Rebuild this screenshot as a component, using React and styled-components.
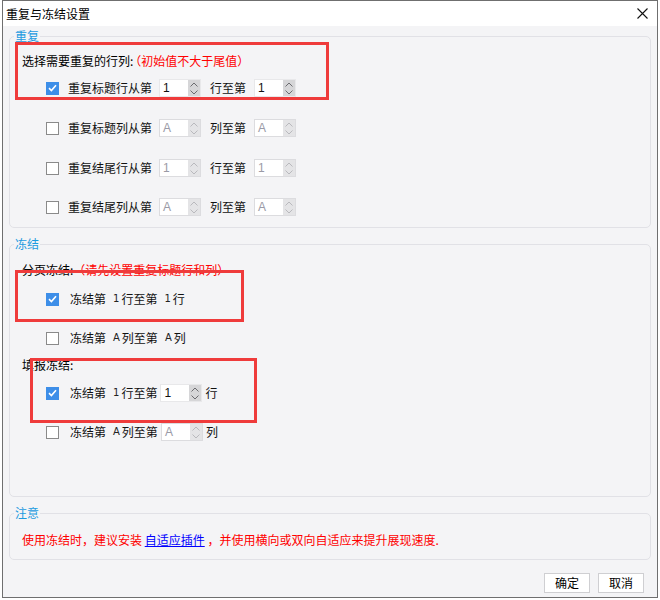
import React from "react";
import styled, { createGlobalStyle } from "styled-components";

const Global = createGlobalStyle`
  html, body { margin: 0; padding: 0; background: #ffffff; }
  body { font-family: "Noto Sans CJK SC", "Noto Sans", sans-serif; font-size: 12px; color: #000; }
  * { box-sizing: border-box; }
`;

const Dialog = styled.div`
  position: relative;
  width: 656px;
  height: 598px;
  margin-left: 2px;
  border: 1px solid #6f6f6f;
  background: #f4f4f6;
  display: flex;
  flex-direction: column;
`;

const TitleBar = styled.div`
  height: 25px;
  flex: none;
  background: #ffffff;
  display: flex;
  align-items: center;
  justify-content: space-between;
  padding: 0 9px 0 3px;
`;

const Title = styled.span`
  font-size: 12px;
  line-height: 14px;
  color: #000;
`;

const Body = styled.div`
  display: flex;
  flex-direction: column;
  padding: 0 6px;
`;

const Group = styled.fieldset`
  margin: ${(p) => p.$mt}px 0 0;
  padding: 0;
  border: 1px solid #e1e1e6;
  border-radius: 5px;
  min-width: 0;
`;

const Legend = styled.legend`
  margin-left: 4px;
  padding: 0 1px;
  font-size: 12px;
  line-height: 14px;
  color: #1c9be0;
`;

const Content = styled.div`
  display: flex;
  flex-direction: column;
  padding: ${(p) => p.$pt}px 12px ${(p) => p.$pb}px 12px;
`;

const Line = styled.div`
  display: flex;
  align-items: center;
  height: 20px;
  margin-top: ${(p) => p.$mt || 0}px;
  padding-left: ${(p) => (p.$indent ? 24 : 0)}px;
  font-size: 12px;
  line-height: 20px;
  white-space: pre;
`;

const Red = styled.span`
  color: #ff0000;
  margin-left: ${(p) => p.$ml || 0}px;
`;

const Link = styled.a`
  color: #0000ff;
  text-decoration: underline;
  cursor: pointer;
`;

const Box = styled.span`
  width: 13px;
  height: 13px;
  flex: none;
  display: inline-flex;
  align-items: center;
  justify-content: center;
  border: 1px solid ${(p) => (p.$checked ? "#3d8ee8" : "#8a8a8a")};
  background: ${(p) => (p.$checked ? "#3d8ee8" : "#ffffff")};
`;

const Label = styled.span`
  margin-left: ${(p) => p.$ml}px;
  color: #111;
`;

const Num = styled.span`
  font-family: "DejaVu Sans", sans-serif;
  font-size: 10px;
  margin: 0 2px 0 7px;
  color: #222;
`;

const Spin = styled.span`
  display: inline-flex;
  flex: none;
  width: 42px;
  height: 18px;
  margin-left: ${(p) => p.$ml}px;
  border: 1px solid ${(p) => (p.$disabled ? "#dcdcdf" : "#e8e8ea")};
  background: #ffffff;
`;

const SpinValue = styled.span`
  flex: 1;
  padding-left: 3px;
  font-family: "Liberation Sans", "Noto Sans", sans-serif;
  font-size: 12px;
  line-height: 16px;
  color: ${(p) => (p.$disabled ? "#9a9aa6" : "#111")};
`;

const SpinButtons = styled.span`
  width: 12px;
  display: flex;
  flex-direction: column;
  align-items: center;
  justify-content: space-around;
  background: ${(p) => (p.$disabled ? "#e4e4e6" : "#d6d6d8")};
`;

const Footer = styled.div`
  display: flex;
  justify-content: flex-end;
  gap: 8px;
  margin-top: 13px;
  padding-right: 7px;
`;

const Button = styled.button`
  width: 46px;
  height: 20px;
  padding: 0;
  border: 1px solid #cfcfd2;
  background: #ffffff;
  font-family: "Noto Sans CJK SC", sans-serif;
  font-size: 12px;
  line-height: 16px;
  color: #000;
`;

const Annot = styled.div`
  position: absolute;
  left: ${(p) => p.$x}px;
  top: ${(p) => p.$y}px;
  width: ${(p) => p.$w}px;
  height: ${(p) => p.$h}px;
  border: 3px solid #ef3b3b;
  pointer-events: none;
`;

const Check = ({ checked }) => (
  <Box $checked={checked}>
    {checked && (
      <svg width="9" height="8" viewBox="0 0 9 8">
        <path d="M1 4.2 L3.4 6.5 L8 1.2" stroke="#fff" strokeWidth="1.6" fill="none" />
      </svg>
    )}
  </Box>
);

const Spinner = ({ value, disabled, ml }) => {
  const c = disabled ? "#b9b9bd" : "#6c6c70";
  return (
    <Spin $disabled={disabled} $ml={ml}>
      <SpinValue $disabled={disabled}>{value}</SpinValue>
      <SpinButtons $disabled={disabled}>
        <svg width="8" height="5" viewBox="0 0 8 5">
          <path d="M0.5 4.5 L4 1 L7.5 4.5" stroke={c} strokeWidth="1" fill="none" />
        </svg>
        <svg width="8" height="5" viewBox="0 0 8 5">
          <path d="M0.5 0.5 L4 4 L7.5 0.5" stroke={c} strokeWidth="1" fill="none" />
        </svg>
      </SpinButtons>
    </Spin>
  );
};

const RepeatRow = ({ checked, label, mid, value, mt }) => (
  <Line $indent $mt={mt}>
    <Check checked={checked} />
    <Label $ml={9}>{label}</Label>
    <Spinner value={value} disabled={!checked} ml={7} />
    <Label $ml={9}>{mid}</Label>
    <Spinner value={value} disabled={!checked} ml={8} />
  </Line>
);

export default function App() {
  return (
    <>
      <Global />
      <Dialog>
        <TitleBar>
          <Title>重复与冻结设置</Title>
          <svg width="11" height="11" viewBox="0 0 11 11">
            <path d="M0.5 0.5 L10.5 10.5 M10.5 0.5 L0.5 10.5" stroke="#111" strokeWidth="1.1" />
          </svg>
        </TitleBar>
        <Body>
          <Group $mt={3}>
            <Legend>重复</Legend>
            <Content $pt={8} $pb={10}>
              <Line>
                选择需要重复的行列:<Red $ml={-4}>（初始值不大于尾值）</Red>
              </Line>
              <RepeatRow checked label="重复标题行从第" mid="行至第" value="1" mt={7} />
              <RepeatRow label="重复标题列从第" mid="列至第" value="A" mt={20} />
              <RepeatRow label="重复结尾行从第" mid="行至第" value="1" mt={20} />
              <RepeatRow label="重复结尾列从第" mid="列至第" value="A" mt={19} />
            </Content>
          </Group>

          <Group $mt={9}>
            <Legend>冻结</Legend>
            <Content $pt={9} $pb={54}>
              <Line>
                分页冻结:<Red>（请先设置重复标题行和列）</Red>
              </Line>
              <Line $indent $mt={9}>
                <Check checked />
                <Label $ml={11}>冻结第</Label>
                <Num>1</Num>
                <Label $ml={0}>行至第</Label>
                <Num>1</Num>
                <Label $ml={0}>行</Label>
              </Line>
              <Line $indent $mt={19}>
                <Check />
                <Label $ml={11}>冻结第</Label>
                <Num>A</Num>
                <Label $ml={0}>列至第</Label>
                <Num>A</Num>
                <Label $ml={0}>列</Label>
              </Line>
              <Line $mt={7}>填报冻结:</Line>
              <Line $indent $mt={8}>
                <Check checked />
                <Label $ml={11}>冻结第</Label>
                <Num>1</Num>
                <Label $ml={0}>行至第</Label>
                <Spinner value="1" ml={3} />
                <Label $ml={3}>行</Label>
              </Line>
              <Line $indent $mt={19}>
                <Check />
                <Label $ml={11}>冻结第</Label>
                <Num>A</Num>
                <Label $ml={0}>列至第</Label>
                <Spinner value="A" disabled ml={3} />
                <Label $ml={3}>列</Label>
              </Line>
            </Content>
          </Group>

          <Group $mt={9}>
            <Legend>注意</Legend>
            <Content $pt={10} $pb={9}>
              <Line>
                <Red>使用冻结时，建议安装 </Red>
                <Link>自适应插件</Link>
                <Red> ，并使用横向或双向自适应来提升展现速度.</Red>
              </Line>
            </Content>
          </Group>

          <Footer>
            <Button>确定</Button>
            <Button>取消</Button>
          </Footer>
        </Body>

        <Annot $x={12} $y={41} $w={314} $h={58} />
        <Annot $x={12} $y={269} $w={229} $h={52} />
        <Annot $x={27} $y={357} $w={227} $h={65} />
      </Dialog>
    </>
  );
}
